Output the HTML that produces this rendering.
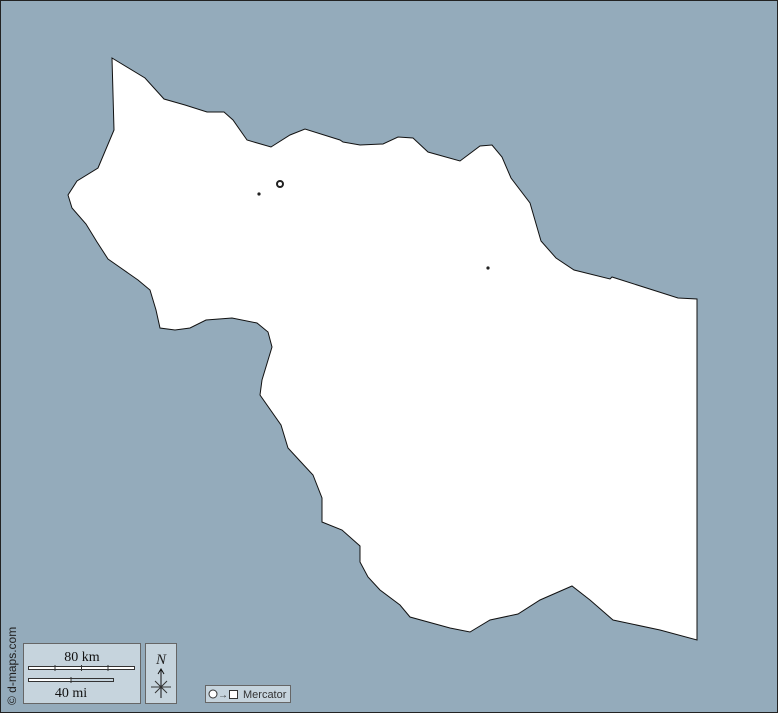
<!DOCTYPE html>
<html><head><style>
body{margin:0;width:778px;height:713px;overflow:hidden;font-family:"Liberation Serif",serif}
</style></head><body>
<svg width="778" height="713" xmlns="http://www.w3.org/2000/svg">
<rect x="0.5" y="0.5" width="777" height="712" fill="#94abbb" stroke="#222" stroke-width="1"/>
<polygon fill="#fff" stroke="#111" stroke-width="1" points="112,58 145,78 164,99 185,105 207,112 224,112 233,120 247,140 271,147 290,135 305,129 340,140 343,142 360,145 383,144 398,137 413,138 428,152 460,161 480,146 492,145 502,157 511,178 530,203 541,241 556,258 574,270 610,279 612,277 678,298 697,299 697,640 660,630 613,620 590,600 572,586 540,600 518,614 490,620 470,632 450,628 410,617 400,605 380,590 368,577 360,562 360,546 342,530 322,522 322,498 313,475 300,461 288,448 281,425 260,395 262,380 272,347 268,332 257,323 232,318 206,320 190,328 175,330 160,328 156,310 150,290 138,280 118,266 108,259 97,242 86,224 72,208 68,195 77,181 98,168 114,130"/>
<circle cx="280" cy="184" r="3" fill="none" stroke="#222" stroke-width="2"/>
<circle cx="259" cy="194" r="1.6" fill="#222"/>
<circle cx="488" cy="268" r="1.6" fill="#222"/>
<text transform="translate(16,705) rotate(-90)" font-family="Liberation Sans,sans-serif" font-size="12" fill="#222">© d-maps.com</text>
<rect x="23.5" y="643.5" width="117" height="60" fill="#c6d4dd" stroke="#666"/>
<text x="82" y="661" font-size="14" text-anchor="middle" fill="#111">80 km</text>
<rect x="28.5" y="666.5" width="106" height="3" fill="#fff" stroke="#333"/>
<line x1="55" y1="665" x2="55" y2="671" stroke="#333"/><line x1="81.5" y1="665" x2="81.5" y2="671" stroke="#333"/><line x1="108" y1="665" x2="108" y2="671" stroke="#333"/>
<rect x="28.5" y="678.5" width="85" height="3" fill="#c6d4dd" stroke="#333"/>
<rect x="29" y="679" width="42" height="2" fill="#fff"/>
<line x1="71" y1="677" x2="71" y2="683" stroke="#333"/>
<text x="71" y="697" font-size="14" text-anchor="middle" fill="#111">40 mi</text>
<rect x="145.5" y="643.5" width="31" height="60" fill="#c6d4dd" stroke="#666"/>
<text x="161" y="664" font-size="15" font-style="italic" text-anchor="middle" fill="#222">N</text>
<line x1="161" y1="669" x2="161" y2="698" stroke="#111"/>
<path d="M158,674 L161,669 L164,674" fill="none" stroke="#111"/>
<line x1="151" y1="687" x2="171" y2="687" stroke="#333"/>
<line x1="155" y1="681" x2="167" y2="693" stroke="#333"/><line x1="167" y1="681" x2="155" y2="693" stroke="#333"/>
<rect x="205.5" y="685.5" width="85" height="17" fill="#c6d4dd" stroke="#666"/>
<circle cx="213" cy="694" r="4" fill="#fff" stroke="#333"/>
<text x="218" y="698" font-family="Liberation Sans,sans-serif" font-size="10" fill="#333">→</text>
<rect x="229.5" y="690.5" width="8" height="8" fill="#fff" stroke="#333"/>
<text x="243" y="698" font-family="Liberation Sans,sans-serif" font-size="11" fill="#333">Mercator</text>
</svg>
</body></html>
